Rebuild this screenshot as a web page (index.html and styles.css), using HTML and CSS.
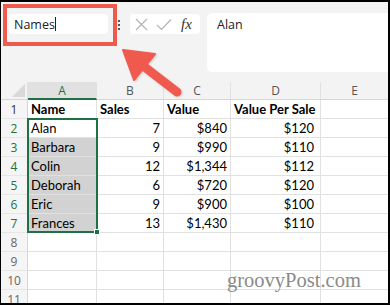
FILE: index.html
```html
<!DOCTYPE html>
<html lang="en">
<head>
    <meta charset="UTF-8">
    <title>Names</title>
    <link rel="stylesheet" href="styles.css">
</head>
<body>
    <div class="frame">
        <div class="toolbar">
            <div class="callout"><div class="namebox">Names<span class="caret"></span></div></div>
            <div class="grip"><i></i><i></i><i></i></div>
            <div class="fxbtns">
                <svg width="13" height="13" viewBox="0 0 13 13"><path d="M1 1L12 12M12 1L1 12" stroke="#b3b3b3" stroke-width="1.2" fill="none"/></svg>
                <svg width="16" height="13" viewBox="0 0 16 13"><path d="M1 7L5.5 11.5L15 1.5" stroke="#b3b3b3" stroke-width="1.2" fill="none"/></svg>
                <span class="fx">fx</span>
            </div>
            <div class="formula">Alan</div>
        </div>
        <div class="sheet">
            <div class="corner"></div>
            <div class="colhead sel">A</div>
            <div class="colhead">B</div>
            <div class="colhead">C</div>
            <div class="colhead">D</div>
            <div class="colhead">E</div>

            <div class="rowhead dark">1</div>
            <div class="cell b">Name</div><div class="cell b">Sales</div><div class="cell b">Value</div><div class="cell b">Value Per Sale</div><div class="cell"></div>

            <div class="rowhead on">2</div>
            <div class="cell">Alan</div><div class="cell r">7</div><div class="cell r">$840</div><div class="cell r pad">$120</div><div class="cell"></div>

            <div class="rowhead on">3</div>
            <div class="cell grey">Barbara</div><div class="cell r">9</div><div class="cell r">$990</div><div class="cell r pad">$110</div><div class="cell"></div>

            <div class="rowhead on">4</div>
            <div class="cell grey">Colin</div><div class="cell r">12</div><div class="cell r">$1,344</div><div class="cell r pad">$112</div><div class="cell"></div>

            <div class="rowhead on">5</div>
            <div class="cell grey">Deborah</div><div class="cell r">6</div><div class="cell r">$720</div><div class="cell r pad">$120</div><div class="cell"></div>

            <div class="rowhead on">6</div>
            <div class="cell grey">Eric</div><div class="cell r">9</div><div class="cell r">$900</div><div class="cell r pad">$100</div><div class="cell"></div>

            <div class="rowhead on">7</div>
            <div class="cell grey">Frances</div><div class="cell r">13</div><div class="cell r">$1,430</div><div class="cell r pad">$110</div><div class="cell"></div>

            <div class="rowhead">8</div>
            <div class="cell"></div><div class="cell"></div><div class="cell"></div><div class="cell"></div><div class="cell"></div>
            <div class="rowhead">9</div>
            <div class="cell"></div><div class="cell"></div><div class="cell"></div><div class="cell"></div><div class="cell"></div>
            <div class="rowhead">10</div>
            <div class="cell"></div><div class="cell"></div><div class="cell"></div><div class="cell"></div><div class="cell"></div>
            <div class="rowhead">11</div>
            <div class="cell"></div><div class="cell"></div><div class="cell"></div><div class="cell"></div><div class="cell"></div>

            <div class="selection"><span class="handle"></span></div>
            <div class="watermark">groovyPost.com</div>
        </div>
        <svg class="arrow" width="390" height="305" viewBox="0 0 390 305">
            <line x1="177" y1="92" x2="142" y2="65" stroke="#f05a4e" stroke-width="9" stroke-linecap="round"/>
            <polygon points="123,50 155,54 134,80" fill="#f05a4e" stroke="#f05a4e" stroke-width="2" stroke-linejoin="round"/>
        </svg>
    </div>
</body>
</html>
```

FILE: styles.css
```css
*{box-sizing: border-box;}
body{margin: 0; background-color: #fff;}
.frame{position: relative; width: 390px; height: 305px; border: 2px solid #000; border-left-width: 1px; overflow: hidden; background-color: #fff;}

/* 名称框 + 编辑栏 */
.toolbar{display: flex; align-items: flex-start; height: 78px; background-color: #f3f3f3; font-family: "Open Sans", sans-serif; font-size: 12.5px; color: #222;}
.callout{margin: 2px 0 0 2px; padding: 6px 5px 8px 2px; border: 4px solid #ef5a4f;}
.namebox{display: flex; align-items: center; width: 99px; height: 20px; padding-left: 5px; background-color: #fff; border-radius: 4px;}
.caret{display: inline-block; width: 1px; height: 14px; background-color: #222;}
.grip{display: flex; flex-direction: column; gap: 2px; margin: 18px 0 0 1px; width: 4px;}
.grip i{display: block; width: 2px; height: 2px; background-color: #555;}
.fxbtns{display: flex; align-items: center; gap: 8px; margin: 12px 0 0 8px; height: 20px; width: 70px; padding-left: 5px; background-color: #fff; border-radius: 4px;}
.fxbtns svg{display: block;}
.fx{font-family: "Liberation Serif", serif; font-style: italic; font-size: 15px; color: #333; margin-left: 1px;}
.formula{flex: 1; margin: 11px 0 0 7px; height: 59px; padding: 3px 10px; background-color: #fff; border-radius: 5px 0 0 5px;}

/* 表格 */
.sheet{position: relative; display: grid; grid-template-columns: 27px 69px 67px 67px 90px 68px; grid-template-rows: 18px repeat(11, 19px); font-family: Lato, sans-serif; font-size: 13px; color: #000; border-top: 2px solid #f3f3f3;}
.corner{position: relative; background-color: #f3f3f3; border-right: 1px solid #e1e1e1; border-bottom: 1px solid #d6d6d6;}
.corner:after{content: ""; position: absolute; right: 2px; bottom: 2px; border-style: solid; border-width: 0 0 13px 13px; border-color: transparent transparent #d9d9d9 transparent;}
.colhead{display: flex; align-items: center; justify-content: center; background-color: #f3f3f3; border-right: 1px solid #e1e1e1; border-bottom: 1px solid #d6d6d6; font-family: "Open Sans", sans-serif; font-size: 12px; color: #555;}
.colhead.sel{background-color: #e1e1e1; color: #1e7145; border-bottom: 2px solid #1e7145;}
.rowhead{display: flex; align-items: center; justify-content: center; background-color: #f5f5f5; border-right: 1px solid #d6d6d6; border-bottom: 1px solid #e6e6e6; font-family: "Open Sans", sans-serif; font-size: 12px; color: #666;}
.rowhead.dark{color: #333;}
.rowhead.on{color: #1e7145;}
.cell{display: flex; align-items: center; padding: 0 3px; border-right: 1px solid #e1e1e1; border-bottom: 1px solid #e1e1e1; white-space: nowrap;}
.cell.b{font-weight: bold;}
.cell.r{justify-content: flex-end;}
.cell.pad{padding-right: 6px;}
.cell.grey{background-color: #d2d2d2;}
.selection{position: absolute; left: 26px; top: 36px; width: 71px; height: 115px; border: 2px solid #1e7145; pointer-events: none;}
.handle{position: absolute; right: -4px; bottom: -4px; width: 6px; height: 6px; background-color: #1e7145; border: 1px solid #fff;}
.watermark{position: absolute; left: 226px; top: 187px; font-family: "Liberation Serif", serif; font-size: 20.5px; color: #8a8a8a;}
.arrow{position: absolute; left: -1px; top: -2px; pointer-events: none; filter: drop-shadow(1px 1px 1px rgba(0,0,0,0.15));}
```
